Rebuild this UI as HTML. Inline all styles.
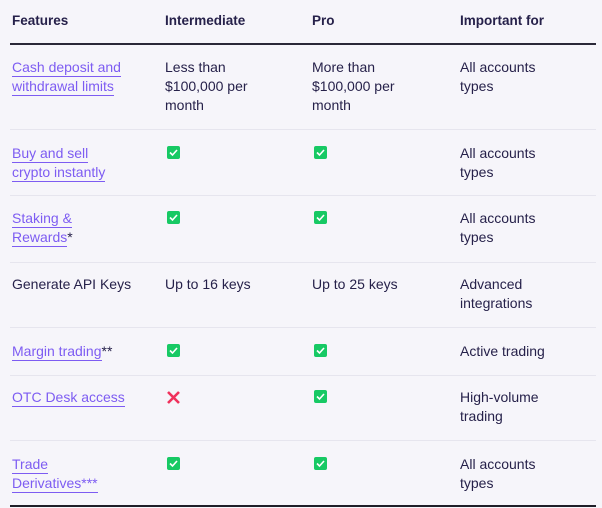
<html><head><style>
body{margin:0;width:602px;height:508px;background:#f6f5fa;font-family:"Liberation Sans",sans-serif;font-size:14px;color:#26214a;position:relative;overflow:hidden}
.t{position:absolute;line-height:19px}
.h{font-weight:bold;top:11px;font-size:13.5px}
a{color:#7d5cf2;text-decoration:none;border-bottom:1.5px solid #7d5cf2;padding-bottom:1px}
.l{position:absolute;left:10px;width:586px;height:1px;background:#e6e5ee}
.c{position:absolute;width:13px;height:13px;background:#17c964;border-radius:2px}
.c svg{position:absolute;left:2px;top:2px}
</style></head><body>
<div class="t h" style="left:12px">Features</div>
<div class="t h" style="left:165px">Intermediate</div>
<div class="t h" style="left:312px">Pro</div>
<div class="t h" style="left:460px">Important for</div>
<div class="l" style="top:43px;height:1.5px;background:#2a2838"></div>

<div class="t" style="left:12px;top:58px"><a>Cash deposit and</a><br><a>withdrawal limits</a></div>
<div class="t" style="left:165px;top:58px">Less than<br>$100,000 per<br>month</div>
<div class="t" style="left:312px;top:58px">More than<br>$100,000 per<br>month</div>
<div class="t" style="left:460px;top:58px">All accounts<br>types</div>
<div class="l" style="top:129px"></div>

<div class="t" style="left:12px;top:144px"><a>Buy and sell</a><br><a>crypto instantly</a></div>
<div class="t" style="left:460px;top:144px">All accounts<br>types</div>
<div class="l" style="top:195px"></div>

<div class="t" style="left:12px;top:209px"><a>Staking &amp;</a><br><a>Rewards</a>*</div>
<div class="t" style="left:460px;top:209px">All accounts<br>types</div>
<div class="l" style="top:262px"></div>

<div class="t" style="left:12px;top:275px">Generate API Keys</div>
<div class="t" style="left:165px;top:275px">Up to 16 keys</div>
<div class="t" style="left:312px;top:275px">Up to 25 keys</div>
<div class="t" style="left:460px;top:275px">Advanced<br>integrations</div>
<div class="l" style="top:327px"></div>

<div class="t" style="left:12px;top:342px"><a>Margin trading</a>**</div>
<div class="t" style="left:460px;top:342px">Active trading</div>
<div class="l" style="top:375px"></div>

<div class="t" style="left:12px;top:388px"><a>OTC Desk access</a></div>
<div class="t" style="left:460px;top:388px">High-volume<br>trading</div>
<div class="l" style="top:440px"></div>

<div class="t" style="left:12px;top:455px"><a>Trade</a><br><a>Derivatives***</a></div>
<div class="t" style="left:460px;top:455px">All accounts<br>types</div>
<div class="l" style="top:505px;height:2px;background:#1f1e28"></div>

<div class="c" style="left:167px;top:146px"><svg width="9" height="9"><path d="M1 4.5L3.5 7L8 2" stroke="#fff" stroke-width="1.6" fill="none"/></svg></div>
<div class="c" style="left:314px;top:146px"><svg width="9" height="9"><path d="M1 4.5L3.5 7L8 2" stroke="#fff" stroke-width="1.6" fill="none"/></svg></div>
<div class="c" style="left:167px;top:211px"><svg width="9" height="9"><path d="M1 4.5L3.5 7L8 2" stroke="#fff" stroke-width="1.6" fill="none"/></svg></div>
<div class="c" style="left:314px;top:211px"><svg width="9" height="9"><path d="M1 4.5L3.5 7L8 2" stroke="#fff" stroke-width="1.6" fill="none"/></svg></div>
<div class="c" style="left:167px;top:344px"><svg width="9" height="9"><path d="M1 4.5L3.5 7L8 2" stroke="#fff" stroke-width="1.6" fill="none"/></svg></div>
<div class="c" style="left:314px;top:344px"><svg width="9" height="9"><path d="M1 4.5L3.5 7L8 2" stroke="#fff" stroke-width="1.6" fill="none"/></svg></div>
<svg style="position:absolute;left:166px;top:390px" width="15" height="15"><path d="M2 2L13 13M13 2L2 13" stroke="#f0315c" stroke-width="2.6"/></svg>
<div class="c" style="left:314px;top:390px"><svg width="9" height="9"><path d="M1 4.5L3.5 7L8 2" stroke="#fff" stroke-width="1.6" fill="none"/></svg></div>
<div class="c" style="left:167px;top:457px"><svg width="9" height="9"><path d="M1 4.5L3.5 7L8 2" stroke="#fff" stroke-width="1.6" fill="none"/></svg></div>
<div class="c" style="left:314px;top:457px"><svg width="9" height="9"><path d="M1 4.5L3.5 7L8 2" stroke="#fff" stroke-width="1.6" fill="none"/></svg></div>
</body></html>
